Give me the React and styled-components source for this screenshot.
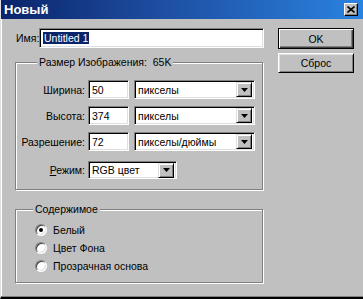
import React from 'react'
import styled, { createGlobalStyle } from 'styled-components'

const GlobalStyle = createGlobalStyle`
  html, body {
    margin: 0;
    padding: 0;
    background: #c0c0c0;
  }
  body {
    font-family: "Liberation Sans", Arial, sans-serif;
    font-size: 10.5px;
    color: #000;
  }
`

const Window = styled.div`
  width: 363px;
  height: 299px;
  box-sizing: border-box;
  background: #c0c0c0;
  border-left: 1px solid #dfdfdf;
  border-bottom: 2px solid #000;
  box-shadow: inset 0 -1px #808080, inset 1px 0 #fff;
  display: flex;
  flex-direction: column;
  overflow: hidden;
`

const TitleBar = styled.div`
  height: 19px;
  flex: none;
  display: flex;
  align-items: center;
  justify-content: space-between;
  padding: 0 5px 0 4px;
  background: linear-gradient(to right, #0a246a 0%, #1c4a9c 40%, #2a82e0 100%);
  margin-left: -1px;
`

const Title = styled.span`
  color: #fff;
  font-weight: bold;
  font-size: 13px;
`

const CloseButton = styled.div`
  width: 14px;
  height: 13px;
  box-sizing: border-box;
  background: #c0c0c0;
  border: 1px solid;
  border-color: #fff #000 #000 #fff;
  box-shadow: inset -1px -1px #808080;
  display: flex;
  align-items: center;
  justify-content: center;
`

const Content = styled.div`
  display: flex;
  padding: 9px 0 0 14px;
`

const LeftCol = styled.div`
  width: 249px;
  display: flex;
  flex-direction: column;
`

const RightCol = styled.div`
  margin-left: 14px;
  width: 76px;
  display: flex;
  flex-direction: column;
  gap: 4px;
`

const NameRow = styled.div`
  height: 20px;
  display: flex;
  align-items: center;
`

const NameLabel = styled.span`
  width: 23px;
  margin-left: 1px;
`

const Sunken = styled.div`
  box-sizing: border-box;
  height: ${p => p.$h || 19}px;
  width: ${p => (p.$w ? p.$w + 'px' : 'auto')};
  flex: ${p => (p.$w ? 'none' : '1')};
  background: #fff;
  border: 1px solid;
  border-color: #808080 #fff #fff #808080;
  box-shadow: inset 1px 1px #000, inset -1px -1px #dfdfdf;
  display: flex;
  align-items: center;
  padding-left: 3px;
  overflow: hidden;
  white-space: nowrap;
`

const Selected = styled.span`
  background: #0a246a;
  color: #fff;
  padding: 0 1px;
`

const GroupBox = styled.div`
  position: relative;
  box-sizing: border-box;
  width: 248px;
  height: ${p => p.$h}px;
  margin-top: ${p => p.$mt}px;
  border: 1px solid #808080;
  box-shadow: inset 1px 1px #fff, 1px 1px #fff;
  padding-top: ${p => p.$pt}px;
`

const Caption = styled.span`
  position: absolute;
  top: -7px;
  left: ${p => p.$left}px;
  background: #c0c0c0;
  padding: 0 2px;
  line-height: 13px;
`

const FieldStack = styled.div`
  display: flex;
  flex-direction: column;
  gap: 7px;
`

const FieldRow = styled.div`
  display: flex;
  align-items: center;
  margin-top: ${p => p.$mt || 0}px;
`

const FieldLabel = styled.span`
  width: 68px;
  margin-left: 1px;
  text-align: right;
  margin-right: 3px;
  white-space: nowrap;
`

const Combo = styled(Sunken)`
  margin-left: ${p => p.$ml || 0}px;
  justify-content: space-between;
  padding-right: 2px;
`

const ArrowBtn = styled.div`
  width: 16px;
  height: 15px;
  box-sizing: border-box;
  background: #c0c0c0;
  border: 1px solid;
  border-color: #dfdfdf #000 #000 #dfdfdf;
  box-shadow: inset 1px 1px #fff, inset -1px -1px #808080;
  display: flex;
  align-items: center;
  justify-content: center;
  flex: none;
`

const Button = styled.div`
  box-sizing: border-box;
  height: ${p => p.$h}px;
  background: #c0c0c0;
  display: flex;
  align-items: center;
  justify-content: center;
  border: 1px solid;
  border-color: ${p => (p.$default ? '#000' : '#fff #000 #000 #fff')};
  box-shadow: ${p =>
    p.$default
      ? 'inset 1px 1px #fff, inset -1px -1px #404040, inset -2px -2px #808080'
      : 'inset 1px 1px #dfdfdf, inset -1px -1px #808080'};
`

const RadioList = styled.div`
  display: flex;
  flex-direction: column;
  padding-left: 19px;
`

const RadioRow = styled.div`
  height: 18px;
  display: flex;
  align-items: center;
  gap: 6px;
`

const RadioDot = styled.span`
  position: relative;
  width: 12px;
  height: 12px;
  box-sizing: border-box;
  border-radius: 50%;
  background: #fff;
  border: 1px solid;
  border-color: #808080 #fff #fff #808080;
  box-shadow: inset 1px 1px #404040, inset -1px -1px #dfdfdf;

  &::after {
    content: '';
    display: ${p => (p.$checked ? 'block' : 'none')};
    position: absolute;
    left: 3px;
    top: 3px;
    width: 4px;
    height: 4px;
    border-radius: 50%;
    background: #000;
  }
`

const Under = styled.span`
  text-decoration: underline;
`

const Arrow = () => (
  <svg width="7" height="4" viewBox="0 0 7 4">
    <path d="M0 0h7L3.5 4z" fill="#000" />
  </svg>
)

export default function App() {
  return (
    <>
      <GlobalStyle />
      <Window>
        <TitleBar>
          <Title>Новый</Title>
          <CloseButton>
            <svg width="8" height="7" viewBox="0 0 8 7">
              <path d="M0.5 0.5L7.5 6.5M7.5 0.5L0.5 6.5" stroke="#000" strokeWidth="1.6" />
            </svg>
          </CloseButton>
        </TitleBar>
        <Content>
          <LeftCol>
            <NameRow>
              <NameLabel>Имя:</NameLabel>
              <Sunken $h={20}>
                <Selected>Untitled 1</Selected>
              </Sunken>
            </NameRow>

            <GroupBox $h={128} $mt={14} $pt={17}>
              <Caption $left={21}>Размер Изображения:&nbsp; 65K</Caption>
              <FieldStack>
                <FieldRow>
                  <FieldLabel>Ширина:</FieldLabel>
                  <Sunken $w={41}>50</Sunken>
                  <Combo $w={121} $ml={5}>
                    пикселы
                    <ArrowBtn><Arrow /></ArrowBtn>
                  </Combo>
                </FieldRow>
                <FieldRow>
                  <FieldLabel>Высота:</FieldLabel>
                  <Sunken $w={41}>374</Sunken>
                  <Combo $w={121} $ml={5}>
                    пикселы
                    <ArrowBtn><Arrow /></ArrowBtn>
                  </Combo>
                </FieldRow>
                <FieldRow>
                  <FieldLabel>Разрешение:</FieldLabel>
                  <Sunken $w={41}>72</Sunken>
                  <Combo $w={121} $ml={5}>
                    пикселы/дюймы
                    <ArrowBtn><Arrow /></ArrowBtn>
                  </Combo>
                </FieldRow>
                <FieldRow $mt={3}>
                  <FieldLabel><Under>Р</Under>ежим:</FieldLabel>
                  <Combo $w={89} $h={18}>
                    RGB цвет
                    <ArrowBtn><Arrow /></ArrowBtn>
                  </Combo>
                </FieldRow>
              </FieldStack>
            </GroupBox>

            <GroupBox $h={74} $mt={19} $pt={11}>
              <Caption $left={17}>Содержимое</Caption>
              <RadioList>
                <RadioRow>
                  <RadioDot $checked />
                  Белый
                </RadioRow>
                <RadioRow>
                  <RadioDot />
                  Цвет Фона
                </RadioRow>
                <RadioRow>
                  <RadioDot />
                  Прозрачная основа
                </RadioRow>
              </RadioList>
            </GroupBox>
          </LeftCol>

          <RightCol>
            <Button $default $h={21}>OK</Button>
            <Button $h={20}>Сброс</Button>
          </RightCol>
        </Content>
      </Window>
    </>
  )
}
